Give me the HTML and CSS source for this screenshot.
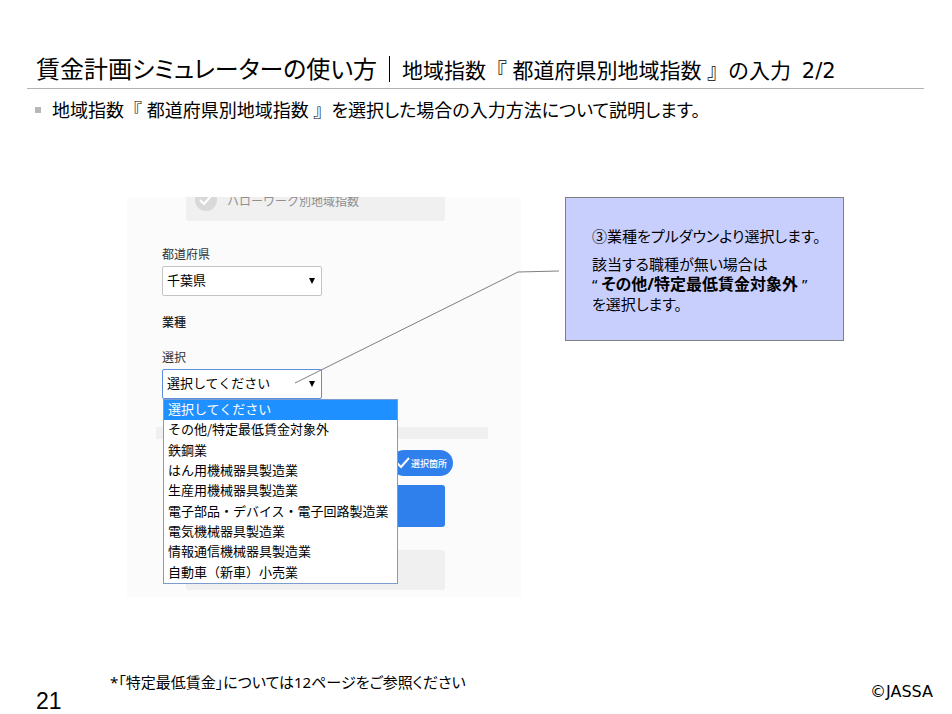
FILE: index.html
```html
<!DOCTYPE html>
<html lang="ja">
<head>
  <meta charset="UTF-8">
  <meta name="viewport" content="width=device-width, initial-scale=1.0">
  <title>賃金計画シミュレーターの使い方</title>
  <link rel="stylesheet" href="styles.css">
</head>
<body>
  <header class="header">
    <h1 class="header__title">賃金計画シミュレーターの使い方<span class="header__bar"></span><span class="header__sub">地域指数『 都道府県別地域指数 』の入力&nbsp; <span class="latin">2/2</span></span></h1>
  </header>

  <main class="main">
    <ul class="lead">
      <li class="lead__item"><p><span class="lead__name">地域指数『 都道府県別地域指数 』</span>を選択した場合の入力方法について説明します。</p></li>
    </ul>

    <div class="stage">
      <section class="panel">
        <div class="card card--top">
          <svg class="card__icon" viewBox="0 0 22 22" aria-hidden="true">
            <circle cx="11" cy="11" r="11" fill="#d9d9d9"/>
            <path d="M5 11l4 4 8-9" fill="none" stroke="#fff" stroke-width="2"/>
          </svg>
          <span>ハローワーク別地域指数</span>
        </div>

        <form class="form">
          <label class="form__label" for="pref">都道府県</label>
          <div class="select">
            <select id="pref" class="select__box">
              <option>千葉県</option>
            </select>
          </div>

          <h2 class="form__title">業種</h2>

          <label class="form__label" for="industry">選択</label>
          <div class="select">
            <select id="industry" class="select__box select__box--open">
              <option>選択してください</option>
            </select>
            <ul class="options" role="listbox" aria-labelledby="industry">
              <li class="options__item options__item--active" role="option" aria-selected="true">選択してください</li>
              <li class="options__item" role="option">その他/特定最低賃金対象外</li>
              <li class="options__item" role="option">鉄鋼業</li>
              <li class="options__item" role="option">はん用機械器具製造業</li>
              <li class="options__item" role="option">生産用機械器具製造業</li>
              <li class="options__item" role="option">電子部品・デバイス・電子回路製造業</li>
              <li class="options__item" role="option">電気機械器具製造業</li>
              <li class="options__item" role="option">情報通信機械器具製造業</li>
              <li class="options__item" role="option">自動車（新車）小売業</li>
            </ul>
          </div>
        </form>

        <div class="divider"></div>
        <div class="badge">
          <svg class="badge__icon" viewBox="0 0 14 12" aria-hidden="true">
            <path d="M1 6l4 4 8-9" fill="none" stroke="#fff" stroke-width="2"/>
          </svg>
          <span>選択箇所</span>
        </div>
        <div class="card card--blue"></div>
        <div class="card card--bottom"></div>
      </section>

      <aside class="note">
        <p class="note__text">③業種をプルダウンより選択します。</p>
        <p class="note__text">該当する職種が無い場合は<br>“ <b class="note__strong">その他/特定最低賃金対象外</b> ”<br>を選択します。</p>
      </aside>

      <!-- 吹き出しから選択欄への線 -->
      <svg class="pointer" viewBox="0 0 717 400" preserveAspectRatio="none" aria-hidden="true">
        <path d="M168 186L391 75L432 74" fill="none" stroke="#7f7f7f" stroke-width="1"/>
      </svg>
    </div>
  </main>

  <footer class="footer">
    <span class="footer__page">21</span>
    <p class="footer__note">*「特定最低賃金」については12ページをご参照ください</p>
    <span class="footer__copy latin">©JASSA</span>
  </footer>
</body>
</html>
```

FILE: styles.css
```css
* {
  box-sizing: border-box;
}

html, body {
  height: 100%;
}

body {
  margin: 0;
  font-family: "Noto Sans", "Noto Sans CJK JP", sans-serif;
  font-size: 16px;
  background-color: #fff;
  color: #000;
  display: flex;
  flex-direction: column;
}

h1, h2, p, ul {
  margin: 0;
  padding: 0;
}

ul {
  list-style: none;
}

.latin {
  font-family: "DejaVu Sans", sans-serif;
}

.header {
  margin: 0 28px 0 27px;
  padding: 49px 0 0 9px;
  border-bottom: 1px solid #b2b2b2;
}

.header__title {
  display: flex;
  align-items: center;
  font-size: 24px;
  font-weight: 400;
  line-height: 38px;
  white-space: nowrap;
  font-feature-settings: "palt";
}

.header__bar {
  width: 1px;
  height: 26px;
  margin: 0 12px;
  background-color: #000;
}

.header__sub {
  padding-top: 4px;
  font-size: 21px;
  line-height: 34px;
  font-feature-settings: normal;
}

.main {
  flex: 1 0 auto;
}

.lead {
  padding: 8px 35px;
}

.lead__item {
  display: flex;
  align-items: center;
  gap: 11px;
  font-size: 18px;
  line-height: 26px;
  font-feature-settings: "palt";
}

.lead__item::before {
  content: "";
  width: 6px;
  height: 6px;
  background-color: #b8b8b8;
}

.lead__name {
  font-feature-settings: normal;
}

.stage {
  position: relative;
  display: grid;
  grid-template-columns: 394fr 279fr;
  column-gap: 44px;
  align-items: start;
  margin: 66px 108px 0 127px;
}

.panel {
  overflow: hidden;
  padding-bottom: 7px;
  background-color: #fbfbfb;
  font-family: "Noto Sans CJK JP", sans-serif;
}

.card {
  display: flex;
  align-items: center;
  height: 42px;
  margin: 0 76px 0 59px;
  border-radius: 3px;
  background-color: #f0f0f0;
}

/* カードの上側はパネルで隠れる */
.card--top {
  margin-top: -18px;
  padding-left: 9px;
  gap: 10px;
  font-size: 12px;
  color: #8f8f8f;
}

.card__icon {
  width: 22px;
  height: 22px;
}

.card--blue {
  margin-top: 9px;
  background-color: #2f80ed;
}

.card--bottom {
  height: 40px;
  margin-top: 23px;
}

.form {
  padding: 25px 35px 0;
}

.form__label {
  display: block;
  margin-bottom: 4px;
  font-size: 12px;
  line-height: 16px;
  color: #333;
}

.form__title {
  margin: 18px 0 19px;
  font-size: 12px;
  font-weight: 500;
  line-height: 16px;
  color: #222;
}

.select {
  position: relative;
  width: 160px;
}

.select::after {
  content: "";
  position: absolute;
  top: 12px;
  right: 7px;
  border: 3px solid transparent;
  border-top: 6px solid #000;
  border-bottom: 0;
}

.select__box {
  display: block;
  width: 100%;
  height: 30px;
  padding: 0 4px 3px;
  border: 1px solid #c4c4c4;
  border-radius: 2px;
  background-color: #fff;
  color: #000;
  font-family: inherit;
  font-size: 13px;
  appearance: none;
}

.select__box--open {
  border-color: #5b8fdd;
}

.options {
  position: absolute;
  z-index: 1;
  top: 100%;
  left: 1px;
  display: grid;
  width: 235px;
  min-height: 185px;
  border: 1px solid #7a9cd0;
  background-color: #fff;
}

.options__item {
  padding-left: 4px;
  font-size: 13px;
  line-height: 18px;
  white-space: nowrap;
}

.options__item--active {
  background-color: #1e90ff;
  color: #fff;
}

.divider {
  height: 12px;
  margin: 28px 33px 11px 29px;
  background-color: #f0f0f0;
}

.badge {
  display: flex;
  align-items: center;
  gap: 1px;
  width: 62px;
  height: 26px;
  margin: 0 68px 0 auto;
  padding-left: 5px;
  border-radius: 13px;
  background-color: #2f80ed;
  color: #fff;
  font-size: 9px;
  font-weight: 500;
  white-space: nowrap;
}

.badge__icon {
  width: 14px;
  height: 12px;
}

.note {
  min-height: 144px;
  padding: 28px 12px 26px 26px;
  border: 1px solid #7f7f7f;
  background-color: #c9cffd;
  font-size: 15px;
  font-feature-settings: "palt";
}

.note__text {
  line-height: 20px;
  white-space: nowrap;
}

.note__text + .note__text {
  margin-top: 8px;
}

.note__strong {
  font-size: 16px;
}

.pointer {
  position: absolute;
  z-index: 2;
  top: 0;
  left: 0;
  width: 100%;
  height: 100%;
  pointer-events: none;
}

.footer {
  display: flex;
  padding: 0 19px 0 36px;
}

.footer__page {
  width: 74px;
  padding-top: 18px;
  font-family: "Liberation Sans", sans-serif;
  font-size: 23px;
  line-height: 26px;
}

.footer__note {
  flex: 1;
  font-size: 15px;
  line-height: 24px;
  font-feature-settings: "palt";
}

.footer__copy {
  padding-top: 10px;
  line-height: 24px;
}
```
